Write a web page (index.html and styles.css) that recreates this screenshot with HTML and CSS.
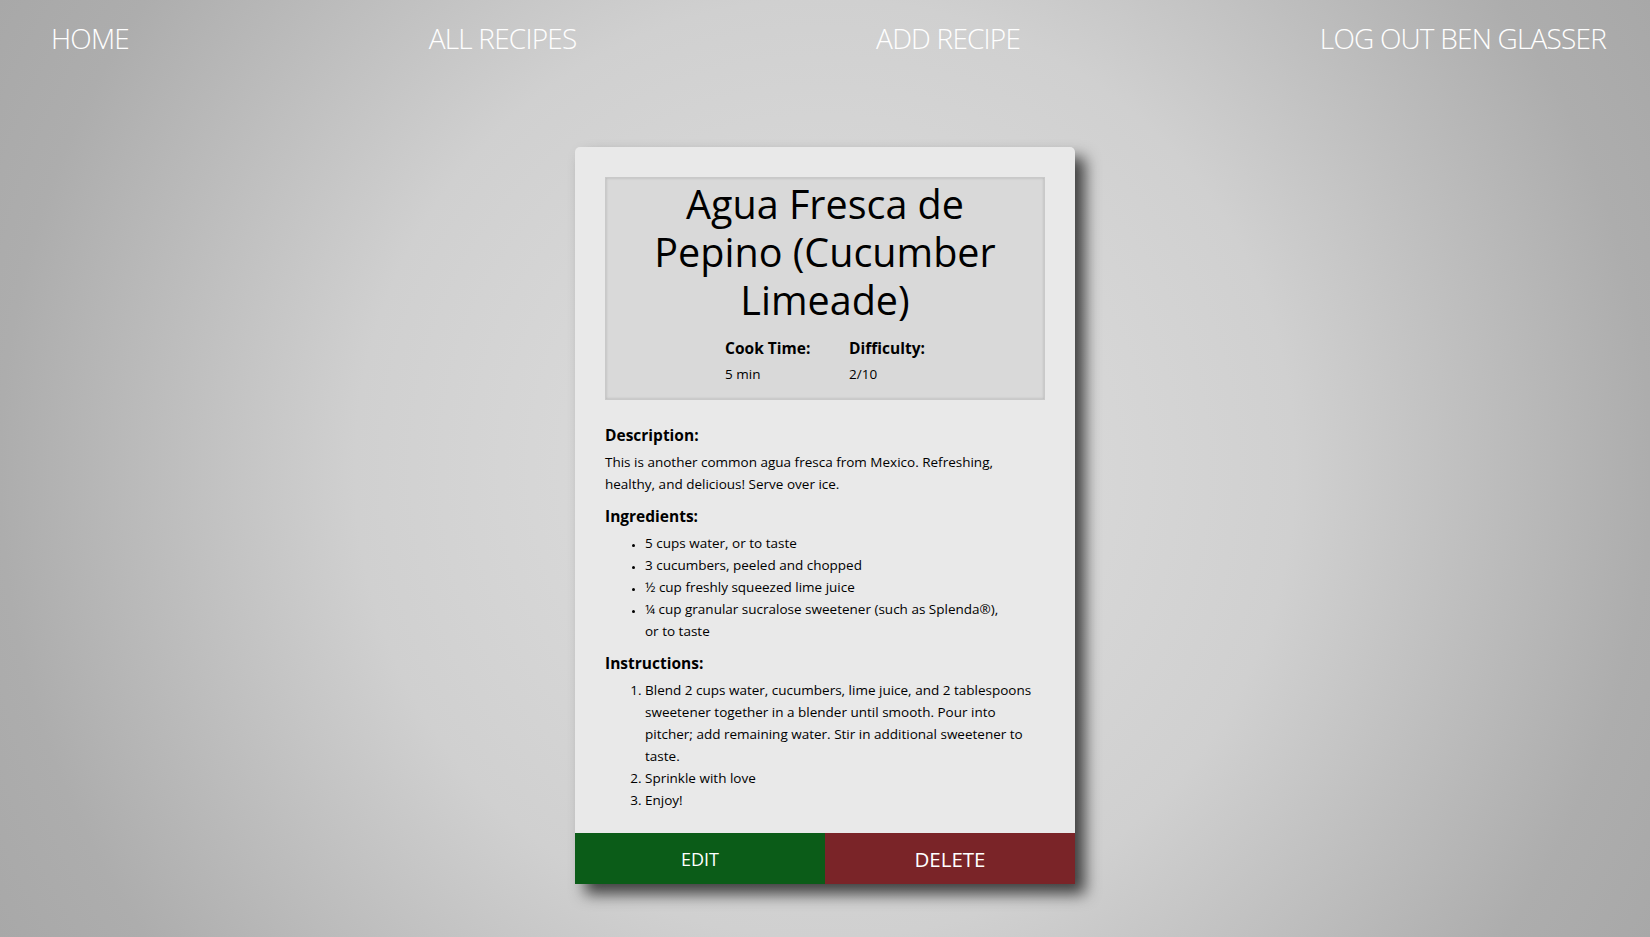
FILE: index.html
```html
<!DOCTYPE html>
<html lang="en">
<head>
<meta charset="utf-8">
<title>Agua Fresca de Pepino</title>
<link rel="stylesheet" href="styles.css">
</head>
<body>
<nav class="nav">
  <a class="nav-link" href="#">HOME</a>
  <a class="nav-link" href="#">ALL RECIPES</a>
  <a class="nav-link" href="#">ADD RECIPE</a>
  <a class="nav-link" href="#">LOG OUT BEN GLASSER</a>
</nav>
<main class="main">
  <article class="card">
    <div class="card-body">
      <header class="title-box">
        <h1 class="title">Agua Fresca de Pepino (Cucumber Limeade)</h1>
        <div class="meta">
          <div class="meta-col meta-col-first">
            <div class="meta-label">Cook Time:</div>
            <div class="meta-value">5 min</div>
          </div>
          <div class="meta-col">
            <div class="meta-label">Difficulty:</div>
            <div class="meta-value">2/10</div>
          </div>
        </div>
      </header>
      <h3 class="section-title">Description:</h3>
      <p class="text">This is another common agua fresca from Mexico. Refreshing, healthy, and delicious! Serve over ice.</p>
      <h3 class="section-title">Ingredients:</h3>
      <ul class="list ingredients">
        <li>5 cups water, or to taste</li>
        <li>3 cucumbers, peeled and chopped</li>
        <li>½ cup freshly squeezed lime juice</li>
        <li>¼ cup granular sucralose sweetener (such as Splenda®), or to taste</li>
      </ul>
      <h3 class="section-title">Instructions:</h3>
      <ol class="list">
        <li>Blend 2 cups water, cucumbers, lime juice, and 2 tablespoons sweetener together in a blender until smooth. Pour into pitcher; add remaining water. Stir in additional sweetener to taste.</li>
        <li>Sprinkle with love</li>
        <li>Enjoy!</li>
      </ol>
    </div>
    <div class="actions">
      <button class="btn btn-edit">EDIT</button>
      <button class="btn btn-delete">DELETE</button>
    </div>
  </article>
</main>
</body>
</html>
```
FILE: styles.css
```css
html {
  min-height: 100%;
  background: radial-gradient(circle at 50% 50%, #e0e0e0 0px, #d0d0d0 470px, #adadad 825px, #a8a8a8 950px);
}
body {
  margin: 0;
  min-height: 937px;
  font-family: "Open Sans", "Noto Sans", sans-serif;
  color: #000;
}
.nav {
  display: flex;
  justify-content: space-between;
  align-items: center;
  height: 76px;
  padding: 0 44px 0 51px;
}
.nav-link {
  color: #fff;
  text-decoration: none;
  font-family: "Open Sans", sans-serif;
  font-weight: 300;
  font-size: 28px;
  letter-spacing: -0.8px;
  line-height: 40px;
}
.main {
  display: flex;
  justify-content: center;
  padding-top: 71px;
}
.card {
  width: 500px;
  background: #e9e9e9;
  border-radius: 5px 5px 0 0;
  box-shadow: 10px 10px 15px rgba(0, 0, 0, 0.7);
}
.card-body {
  padding: 30px 30px 22px;
}
.title-box {
  background: #d9d9d9;
  border: 1px solid #c9c9c9;
  box-shadow: inset 0 0 3px rgba(0, 0, 0, 0.18);
  padding: 2px 30px 12px;
  margin-bottom: 24px;
}
.title {
  margin: 0;
  text-align: center;
  font-weight: 400;
  font-size: 39.5px;
  line-height: 48px;
}
.meta {
  display: flex;
  justify-content: center;
  margin-top: 11px;
}
.meta-col-first {
  width: 124px;
}
.meta-label {
  font-weight: 700;
  font-size: 15.5px;
  line-height: 26px;
}
.meta-value {
  font-size: 13.5px;
  line-height: 26px;
}
.section-title {
  margin: 10px 0 5px;
  font-size: 15.5px;
  font-weight: 700;
  line-height: 22px;
}
.text {
  margin: 0;
  max-width: 420px;
  font-size: 13.5px;
  line-height: 22px;
}
.list {
  margin: 0;
  padding-left: 40px;
  font-size: 13.5px;
  line-height: 22px;
}
.ingredients {
  padding-right: 30px;
}
.ingredients li::marker {
  font-size: 9px;
}
.actions {
  display: flex;
}
.btn {
  flex: 1;
  height: 51px;
  border: none;
  color: #fff;
  font-family: "Open Sans", sans-serif;
  font-size: 18px;
  padding-top: 2px;
  cursor: pointer;
}
.btn-edit {
  background: #0b5c18;
}
.btn-delete {
  background: #7a2428;
  font-size: 20.5px;
}
```
